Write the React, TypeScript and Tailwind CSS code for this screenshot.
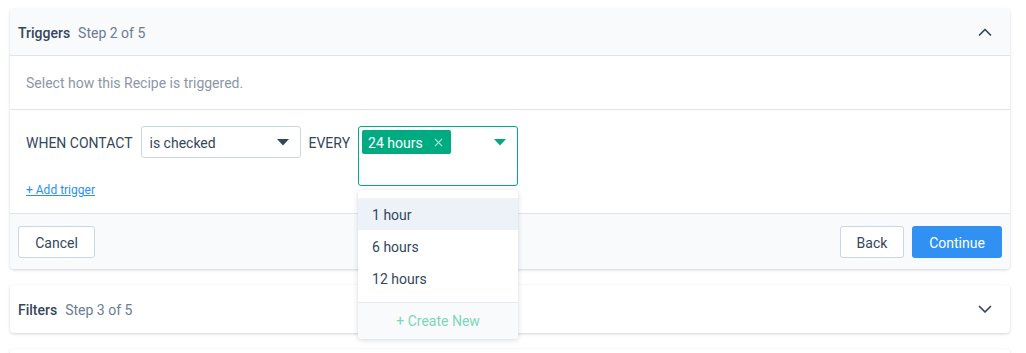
import React from "react";

function Chevron({ up }: { up?: boolean }) {
  return (
    <svg width="14" height="14" viewBox="0 0 14 14" fill="none">
      {up ? (
        <polyline points="1.5,10 7,4.5 12.5,10" stroke="#33475b" strokeWidth="1.7" strokeLinecap="round" strokeLinejoin="round" />
      ) : (
        <polyline points="1.5,4.5 7,10 12.5,4.5" stroke="#33475b" strokeWidth="1.7" strokeLinecap="round" strokeLinejoin="round" />
      )}
    </svg>
  );
}

function Caret({ color }: { color: string }) {
  return (
    <svg width="12" height="7" viewBox="0 0 12 7">
      <polygon points="0,0 12,0 6,6.5" fill={color} />
    </svg>
  );
}

export default function App() {
  return (
    <div className="h-[353px] overflow-hidden bg-white pt-[9px] px-[10px] font-['Roboto',sans-serif] text-[14px] text-[#33475b] flex flex-col gap-4 w-[1026px]">
      {/* Card 1 */}
      <div className="w-[1000px] shrink-0 rounded-[4px] bg-white shadow-[0_1px_3px_rgba(40,55,80,0.22)]">
        <div className="h-[47px] flex items-center justify-between pl-2 pr-[18px] bg-[#f9fafc] border-b border-[#dfe3eb] rounded-t-[4px]">
          <div className="flex items-center gap-2 pt-[3px]">
            <span className="font-medium text-[#33475b]">Triggers</span>
            <span className="text-[#6b7c93]">Step 2 of 5</span>
          </div>
          <Chevron up />
        </div>
        <div className="h-[54px] flex items-center px-4 pt-[1px] text-[#8b97a8] border-b border-[#dfe3eb]">
          Select how this Recipe is triggered.
        </div>
        <div className="h-[104px] px-4 pt-4 border-b border-[#dfe3eb]">
          <div className="flex items-start gap-2">
            <div className="h-8 flex items-center pt-[3px]">WHEN CONTACT</div>
            <div className="w-[160px] h-8 border border-[#cbd6e2] rounded-[3px] flex items-center justify-between pl-2 pr-[11px]">
              <span className="pt-[3px]">is checked</span>
              <Caret color="#33475b" />
            </div>
            <div className="h-8 flex items-center pt-[3px]">EVERY</div>
            <div className="relative">
              <div className="w-[160px] h-[60px] border border-[#00a980] rounded-[3px] flex items-start justify-between pl-[3px] pt-[3px] pr-[11px]">
                <div className="h-6 w-[89px] bg-[#00ab82] rounded-[2px] flex items-center justify-between pl-[6px] pr-[8px] text-white">
                  <span className="pt-[3px]">24 hours</span>
                  <svg width="9" height="9" viewBox="0 0 9 9" className="mt-[1px]">
                    <path d="M1 1 L8 8 M8 1 L1 8" stroke="#9fe3cf" strokeWidth="1.1" />
                  </svg>
                </div>
                <div className="pt-[9px]">
                  <Caret color="#00a980" />
                </div>
              </div>
              <div className="absolute left-0 top-[64px] z-10 w-[160px] bg-white rounded-[4px] shadow-[0_1px_5px_rgba(40,55,80,0.2)] overflow-hidden">
                <div className="pt-2 pb-2">
                  <div className="h-8 flex items-center pl-[14px] pt-[3px] bg-[#edf2f8]">1 hour</div>
                  <div className="h-8 flex items-center pl-[14px] pt-[3px]">6 hours</div>
                  <div className="h-8 flex items-center pl-[14px] pt-[3px]">12 hours</div>
                </div>
                <div className="h-[37px] border-t border-[#e5e9f0] bg-[#f9fafc] flex items-center justify-center text-[#7fd6b8]">
                  + Create New
                </div>
              </div>
            </div>
          </div>
          <div className="mt-[-7px]">
            <a className="text-[12px] leading-4 text-[#2d8ff0] underline">+ Add trigger</a>
          </div>
        </div>
        <div className="bg-[#f9fafc] px-2 flex items-center justify-between rounded-b-[4px] h-[55px]">
          <button className="h-8 w-[77px] border border-[#cbd6e2] rounded-[3px] bg-white text-[#33475b] pt-[3px]">Cancel</button>
          <div className="flex items-center gap-2">
            <button className="h-8 w-[64px] border border-[#cbd6e2] rounded-[3px] bg-white text-[#33475b] pt-[3px]">Back</button>
            <button className="h-8 w-[90px] rounded-[3px] bg-[#3091f2] text-white pt-[3px]">Continue</button>
          </div>
        </div>
      </div>
      {/* Card 2 */}
      <div className="w-[1000px] shrink-0 rounded-[4px] bg-white shadow-[0_1px_3px_rgba(40,55,80,0.22)]">
        <div className="h-[48px] flex items-center justify-between pl-2 pr-[18px]">
          <div className="flex items-center gap-2 pt-[3px]">
            <span className="font-medium text-[#33475b]">Filters</span>
            <span className="text-[#6b7c93]">Step 3 of 5</span>
          </div>
          <Chevron />
        </div>
      </div>
      {/* Card 3 */}
      <div className="w-[1000px] h-[48px] shrink-0 rounded-[4px] bg-white shadow-[0_1px_3px_rgba(40,55,80,0.22)]" />
    </div>
  );
}
